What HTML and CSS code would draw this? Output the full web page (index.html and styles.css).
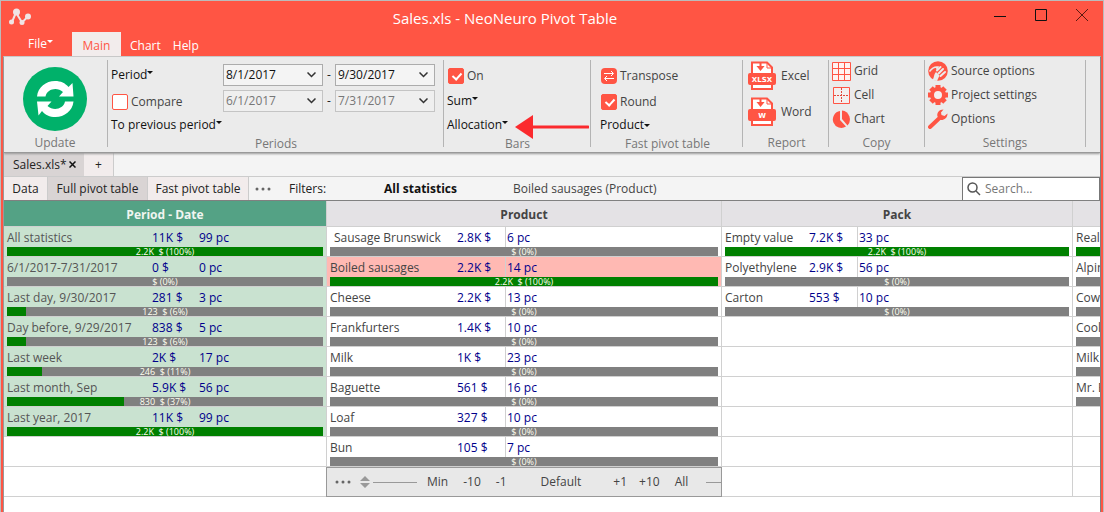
FILE: index.html
```html
<!DOCTYPE html>
<html lang="en">
<head>
<meta charset="utf-8">
<title>Sales.xls - NeoNeuro Pivot Table</title>
<link rel="stylesheet" href="styles.css">
</head>
<body>
<div class="window">
  <header class="titlebar">
    <svg class="logo" width="24" height="18" viewBox="0 0 24 18"><path d="M4 14 8 4.500 14 14.500 20 8.500" fill="none" stroke="#f0e4e4" stroke-width="2"/><g fill="#f0e4e4"><circle cx="3.500" cy="14" r="2.500"/><circle cx="8.500" cy="4" r="3.500"/><circle cx="14" cy="14.500" r="2.500"/><circle cx="20" cy="8.500" r="3"/></g></svg>
    <h1 class="title">Sales.xls - NeoNeuro Pivot Table</h1>
    <div class="window-buttons">
      <button class="window-button" aria-label="Minimize"><svg width="12" height="12"><path d="M0 7.500H12" stroke="#111"/></svg></button>
      <button class="window-button" aria-label="Maximize"><svg width="12" height="12"><path d="M.5 .5H11.500V11.500H.5Z" fill="none" stroke="#111"/></svg></button>
      <button class="window-button" aria-label="Close"><svg width="12" height="12"><path d="M0 0 12 12M12 0 0 12" stroke="#5c1a10"/></svg></button>
    </div>
  </header>
  <nav class="menu">
    <button class="menu-item file">File<i class="caret"></i></button>
    <button class="menu-item active">Main</button>
    <button class="menu-item">Chart</button>
    <button class="menu-item">Help</button>
  </nav>
  <div class="frame">
    <div class="ribbon">
      <section class="group update">
        <button class="refresh" aria-label="Update">
          <svg width="64" height="64" viewBox="0 0 64 64"><circle cx="32" cy="32" r="32" fill="#00b16a"/><path d="M14 29.500C15 20 23 14 32 14 38 14 42 16 45.500 20L49.500 16 50.500 29.500H36L40 25C34 19.500 24 22 22.500 29.500Z" fill="#fff"/><path d="M50.500 34.500C49.500 44 41.500 50 32.500 50 26.500 50 22.500 48 19 44L15.500 48.500 14 34.500H28.500L24.500 39C30.500 44.500 40.500 42 42 34.500Z" fill="#fff"/></svg>
        </button>
        <h2 class="caption">Update</h2>
      </section>
      <section class="group periods">
        <div class="period-grid">
          <button class="link">Period<i class="caret"></i></button>
          <div class="range"><span class="date"><select aria-label="Period start"><option>8/1/2017</option></select><svg width="9" height="6"><path d="M.5 .5 4.500 4.500 8.500 .5"/></svg></span><span class="dash">-</span><span class="date"><select aria-label="Period end"><option>9/30/2017</option></select><svg width="9" height="6"><path d="M.5 .5 4.500 4.500 8.500 .5"/></svg></span></div>
          <label class="check"><input type="checkbox">Compare</label>
          <div class="range"><span class="date"><select disabled aria-label="Comparison start"><option>6/1/2017</option></select><svg width="9" height="6"><path d="M.5 .5 4.500 4.500 8.500 .5"/></svg></span><span class="dash">-</span><span class="date"><select disabled aria-label="Comparison end"><option>7/31/2017</option></select><svg width="9" height="6"><path d="M.5 .5 4.500 4.500 8.500 .5"/></svg></span></div>
          <button class="link wide">To previous period<i class="caret"></i></button>
        </div>
        <h2 class="caption">Periods</h2>
      </section>
      <section class="group bars">
        <div class="stack">
          <label class="check"><input type="checkbox" checked>On</label>
          <button class="link">Sum<i class="caret"></i></button>
          <button class="link">Allocation<i class="caret"></i></button>
        </div>
        <h2 class="caption">Bars</h2>
        <svg class="pointer" width="74" height="24" viewBox="0 0 74 24"><path d="M18 12H73" stroke="#fb2a2e" stroke-width="3" stroke-linecap="round"/><path d="M0 12 18 0V24Z" fill="#fb2a2e"/></svg>
      </section>
      <section class="group fast">
        <div class="stack">
          <button class="check"><svg width="16" height="16"><rect width="16" height="16" rx="4" fill="#ff5544"/><path d="M3 5.500H12M10 3 12.500 5.500 10 8M13 10.500H4M6 8 3.500 10.500 6 13" fill="none" stroke="#fff"/></svg>Transpose</button>
          <label class="check"><input type="checkbox" checked>Round</label>
          <button class="link">Product<i class="caret low"></i></button>
        </div>
        <h2 class="caption">Fast pivot table</h2>
      </section>
      <section class="group report">
        <button class="tool tall"><svg width="28" height="30" viewBox="0 0 28 30"><path d="M4 12V1.500H19L24 6.500V12M4 22V28H24V22" fill="#fff" stroke="#ff5544" stroke-width="2"/><path d="M19 1V7H24" fill="none" stroke="#ff5544"/><path d="M12.500 2V8M10.500 6 12.500 8.500 14.500 6Z" fill="#ff5544" stroke="#ff5544" stroke-width="2"/><rect y="12" width="28" height="12" rx="2" fill="#ff5544"/><text x="14" y="21" text-anchor="middle" class="icon-text">XLSX</text></svg>Excel</button>
        <button class="tool tall"><svg width="28" height="30" viewBox="0 0 28 30"><path d="M4 12V1.500H19L24 6.500V12M4 22V28H24V22" fill="#fff" stroke="#ff5544" stroke-width="2"/><path d="M19 1V7H24" fill="none" stroke="#ff5544"/><path d="M12.500 2V8M10.500 6 12.500 8.500 14.500 6Z" fill="#ff5544" stroke="#ff5544" stroke-width="2"/><rect y="12" width="28" height="12" rx="2" fill="#ff5544"/><text x="14" y="21" text-anchor="middle" class="icon-text">W</text></svg>Word</button>
        <h2 class="caption">Report</h2>
      </section>
      <section class="group copy">
        <button class="tool"><svg width="19" height="19"><path d="M.5 .5H18.500V18.500H.5ZM6.500 0V19M12.500 0V19M0 6.500H19M0 12.500H19" fill="#fff3f1" stroke="#ff5544"/></svg>Grid</button>
        <button class="tool"><svg width="19" height="19"><path d="M1.500 1.500H17.500V17.500H1.500Z" fill="#f4efee" stroke="#ff5544"/><path d="M9.500 2V17M2 9.500H17" stroke="#e0483a" stroke-dasharray="2 1"/></svg>Cell</button>
        <button class="tool"><svg width="19" height="19"><path d="M8 1A8.500 8.500 0 1 0 14 16.500L8 10Z" fill="#ff5544"/><path d="M10 .5A9 9 0 0 1 15.500 15.500L10 9Z" fill="#ff5544"/></svg>Chart</button>
        <h2 class="caption">Copy</h2>
      </section>
      <section class="group settings">
        <button class="tool"><svg width="20" height="20" viewBox="0 0 20 20"><circle cx="10" cy="10" r="9.800" fill="#ff5544"/><path d="M1.500 10.500C4 7 7 5.500 10 6L8.500 8.500" fill="none" stroke="#ebebeb" stroke-width="1.500"/><path d="M15 8 10.500 12.500M17 11 12.500 15M12.500 6 9 9.500" stroke="#ebebeb" stroke-width="2" stroke-linecap="round"/><path d="M4.500 19C6.500 16.500 5.500 13.500 8 11L11.500 14.500 9 20Z" fill="#ebebeb"/></svg>Source options</button>
        <button class="tool"><svg width="20" height="20" viewBox="0 0 20 20"><circle cx="10" cy="10" r="6" fill="#f6eeee" stroke="#ff5544" stroke-width="4"/><path d="M10 0V3M10 17V20M0 10H3M17 10H20M3 3 5 5M15 15 17 17M3 17 5 15M15 5 17 3" stroke="#ff5544" stroke-width="5"/></svg>Project settings</button>
        <button class="tool"><svg width="20" height="20" viewBox="0 0 20 20"><path d="M2 18 11 9.500" stroke="#ff5544" stroke-width="4" stroke-linecap="round"/><path d="M15.500 .5C11 .5 8.500 4 9.500 7.500L12.500 11C16 11.500 19.500 9 19.500 4.500L16.500 7 13.500 6 13 3.500Z" fill="#ff5544"/></svg>Options</button>
        <h2 class="caption">Settings</h2>
      </section>
    </div>
    <div class="files">
      <div class="file-tab">Sales.xls*<button class="close" aria-label="Close file"><svg width="7" height="7"><path d="M.5 .5 6.500 6.500M6.500 .5 .5 6.500" stroke="#111" stroke-width="1.500"/></svg></button></div>
      <button class="add">+</button>
    </div>
    <div class="views">
      <button class="view data">Data</button>
      <button class="view full">Full pivot table</button>
      <button class="view quick">Fast pivot table</button>
      <div class="filters">
        <button class="dots" aria-label="More"><svg width="16" height="4"><g fill="#666"><circle cx="2" cy="2" r="1.500"/><circle cx="8" cy="2" r="1.500"/><circle cx="14" cy="2" r="1.500"/></g></svg></button>
        <span class="filters-label">Filters:</span>
        <button class="filter current">All statistics</button>
        <button class="filter">Boiled sausages (Product)</button>
      </div>
      <label class="search"><svg width="14" height="14"><circle cx="5.500" cy="5.500" r="4.500" fill="none" stroke="#555" stroke-width="1.500"/><path d="M9 9 13 13" stroke="#555" stroke-width="1.500"/></svg><input type="text" placeholder="Search..." aria-label="Search"></label>
    </div>
    <table class="pivot">
      <colgroup><col class="col-period"><col class="col-product"><col class="col-pack"><col></colgroup>
      <thead><tr><th class="period">Period - Date</th><th>Product</th><th>Pack</th><th></th></tr></thead>
      <tbody>
        <tr>
          <td class="period"><div class="cell"><span>All statistics</span><b>11K $</b><b>99 pc</b></div><div class="bar"><i style="width:100%"></i><span>2.2K&nbsp; $ (100%)</span></div></td>
          <td class="product"><div class="cell"><span class="indent">Sausage Brunswick</span><b>2.8K $</b><b>6 pc</b></div><div class="bar"><span>$ (0%)</span></div></td>
          <td class="pack"><div class="cell"><span>Empty value</span><b>7.2K $</b><b>33 pc</b></div><div class="bar"><i style="width:100%"></i><span>2.2K&nbsp; $ (100%)</span></div></td>
          <td class="cut"><div class="cell"><span>Real</span></div><div class="bar"><i style="width:100%"></i></div></td>
        </tr>
        <tr>
          <td class="period"><div class="cell"><span>6/1/2017-7/31/2017</span><b>0 $</b><b>0 pc</b></div><div class="bar"><span>$ (0%)</span></div></td>
          <td class="product selected"><div class="cell"><span>Boiled sausages</span><b>2.2K $</b><b>14 pc</b></div><div class="bar"><i style="width:100%"></i><span>2.2K&nbsp; $ (100%)</span></div></td>
          <td class="pack"><div class="cell"><span>Polyethylene</span><b>2.9K $</b><b>56 pc</b></div><div class="bar"><span>$ (0%)</span></div></td>
          <td class="cut"><div class="cell"><span>Alpine</span></div><div class="bar"></div></td>
        </tr>
        <tr>
          <td class="period"><div class="cell"><span>Last day, 9/30/2017</span><b>281 $</b><b>3 pc</b></div><div class="bar"><i style="width:6%"></i><span>123&nbsp; $ (6%)</span></div></td>
          <td class="product"><div class="cell"><span>Cheese</span><b>2.2K $</b><b>13 pc</b></div><div class="bar"><span>$ (0%)</span></div></td>
          <td class="pack"><div class="cell"><span>Carton</span><b>553 $</b><b>10 pc</b></div><div class="bar"><span>$ (0%)</span></div></td>
          <td class="cut"><div class="cell"><span>Cow</span></div><div class="bar"></div></td>
        </tr>
        <tr>
          <td class="period"><div class="cell"><span>Day before, 9/29/2017</span><b>838 $</b><b>5 pc</b></div><div class="bar"><i style="width:6%"></i><span>123&nbsp; $ (6%)</span></div></td>
          <td class="product"><div class="cell"><span>Frankfurters</span><b>1.4K $</b><b>10 pc</b></div><div class="bar"><span>$ (0%)</span></div></td>
          <td></td>
          <td class="cut"><div class="cell"><span>Cool</span></div><div class="bar"></div></td>
        </tr>
        <tr>
          <td class="period"><div class="cell"><span>Last week</span><b>2K $</b><b>17 pc</b></div><div class="bar"><i style="width:11%"></i><span>246&nbsp; $ (11%)</span></div></td>
          <td class="product"><div class="cell"><span>Milk</span><b>1K $</b><b>23 pc</b></div><div class="bar"><span>$ (0%)</span></div></td>
          <td></td>
          <td class="cut"><div class="cell"><span>Milk</span></div><div class="bar"></div></td>
        </tr>
        <tr>
          <td class="period"><div class="cell"><span>Last month, Sep</span><b>5.9K $</b><b>56 pc</b></div><div class="bar"><i style="width:37%"></i><span>830&nbsp; $ (37%)</span></div></td>
          <td class="product"><div class="cell"><span>Baguette</span><b>561 $</b><b>16 pc</b></div><div class="bar"><span>$ (0%)</span></div></td>
          <td></td>
          <td class="cut"><div class="cell"><span>Mr. B</span></div><div class="bar"></div></td>
        </tr>
        <tr>
          <td class="period"><div class="cell"><span>Last year, 2017</span><b>11K $</b><b>99 pc</b></div><div class="bar"><i style="width:100%"></i><span>2.2K&nbsp; $ (100%)</span></div></td>
          <td class="product"><div class="cell"><span>Loaf</span><b>327 $</b><b>10 pc</b></div><div class="bar"><span>$ (0%)</span></div></td>
          <td></td>
          <td></td>
        </tr>
        <tr>
          <td></td>
          <td class="product"><div class="cell"><span>Bun</span><b>105 $</b><b>7 pc</b></div><div class="bar"><span>$ (0%)</span></div></td>
          <td></td>
          <td></td>
        </tr>
        <tr>
          <td></td>
          <td class="pager-cell"><div class="pager">
            <button aria-label="More"><svg width="16" height="4"><g fill="#666"><circle cx="2" cy="2" r="1.500"/><circle cx="8" cy="2" r="1.500"/><circle cx="14" cy="2" r="1.500"/></g></svg></button>
            <button class="sort" aria-label="Sort"><svg width="10" height="12"><path d="M0 5 5 0 10 5ZM0 7 5 12 10 7Z" fill="#999"/></svg></button>
            <hr class="rule">
            <button class="min">Min</button><button class="less">-10</button><button class="one">-1</button><button class="default">Default</button><button class="one">+1</button><button class="less">+10</button><button>All</button>
            <hr class="rule short">
          </div></td>
          <td></td>
          <td></td>
        </tr>
      </tbody>
    </table>
  </div>
</div>
</body>
</html>
```
FILE: styles.css
```css
* { box-sizing: border-box; }
body { margin: 0; background: #ff5544; font-family: "Open Sans", "Noto Sans", sans-serif; font-size: 12px; line-height: 16px; color: #444; }
button, input, select { font: inherit; color: inherit; }
button { margin: 0; padding: 0; border: 0; background: none; white-space: nowrap; }
svg { flex: none; }

.window { display: flex; flex-direction: column; min-height: 100vh; padding: 0 2px; border: 1px solid #bbb; border-bottom: 0; background: #ff5544; }
.titlebar { display: flex; align-items: center; height: 31px; padding-left: 5px; }
.logo { margin-top: 1px; }
.title { flex: 1; margin: 0; padding-top: 3px; font-size: 15px; line-height: 20px; font-weight: 400; text-align: center; color: #fff; }
.window-buttons { display: flex; align-self: stretch; padding-top: 1px; }
.window-button { width: 41px; padding-left: 2px; }

.menu { display: flex; height: 24px; color: #fff; }
.menu-item { padding: 4px 12px 0 0; }
.menu-item.file { width: 69px; padding: 0 0 0 6px; }
.menu-item.active { width: 49px; margin-right: 9px; padding: 4px 0 0; background: #f2ecec; color: #ff5544; }

.caret { display: inline-block; border: 3px solid transparent; border-top-color: currentColor; border-bottom: 0; vertical-align: 5px; }
.caret.low { vertical-align: 2px; }

.frame { flex: 1; border: 1px solid #ccc; border-left-color: #999; border-right-color: #808080; border-bottom: 0; background: #fff; }

.ribbon { position: relative; display: flex; height: 96px; background: #ebebeb; border-bottom: 1px solid #999; box-shadow: 0 1px 2px #999; }
.group { position: relative; display: flex; flex-direction: column; padding-bottom: 1px; }
.group::after { content: ""; position: absolute; top: 3px; right: 0; bottom: 5px; border-right: 1px solid #b4b4b4; }
.caption { margin: auto 0 0; font-size: 12px; line-height: 16px; font-weight: 400; text-align: center; color: #777; }
.update { width: 104px; align-items: center; padding-right: 2px; }
.refresh { margin-top: 10px; height: 64px; }
.periods { width: 336px; padding-left: 3px; }
.periods .caption { padding-right: 3px; }
.bars { width: 147px; padding-left: 3px; }
.bars .caption { padding-right: 3px; }
.fast { width: 152px; padding-left: 9px; }
.fast .caption { padding-right: 8px; }
.report { width: 86px; padding: 1px 0 1px 5px; }
.report .caption, .copy .caption, .settings .caption { padding-right: 4px; }
.copy { width: 96px; padding: 2px 0 1px 3px; }
.settings { width: 161px; padding: 2px 0 1px 3px; }

.period-grid { display: grid; grid-template-columns: 112px auto; grid-template-rows: 26px 26px 22px; padding-top: 5px; }
.stack { display: grid; grid-template-rows: 26px 26px 22px; padding-top: 5px; }
.link { justify-self: start; color: #111; }
.wide { grid-column: span 2; }
.check { display: flex; align-items: center; gap: 3px; padding-left: 1px; padding-top: 1px; }
.check input { appearance: none; width: 16px; height: 16px; margin: 0; border: 1px solid #ff5544; border-radius: 2px; background: #fff; }
.check input:checked { background: #ff5544; }
.check input:checked::before { content: ""; display: block; width: 4px; height: 7px; margin: 2px 0 0 5px; border: solid #fff; border-width: 0 2px 2px 0; rotate: 42deg; }
.range { display: flex; align-items: center; }
.dash { width: 12px; text-align: center; color: #222; }
.date { display: grid; align-items: center; width: 100px; }
.date select, .date svg { grid-area: 1 / 1; }
.date select { appearance: none; width: 100%; height: 22px; padding: 0 2px; border: 1px solid #acacac; border-radius: 0; background: #f4f4f4; color: #111; }
.date select:disabled { border-color: #c4c4c4; background: #efefef; color: #777; opacity: 1; }
.date svg { justify-self: end; margin-right: 7px; fill: none; stroke: #333; stroke-width: 1.5; pointer-events: none; }
.pointer { position: absolute; left: 71px; top: 58px; }

.tool { display: flex; align-items: center; gap: 3px; height: 24px; }
.tall { height: 36px; gap: 5px; }
.icon-text { font: bold 7px "DejaVu Sans", sans-serif; fill: #fff; }

.files { display: flex; height: 24px; border-bottom: 1px solid #ccc; background: #f4f4f4; color: #222; }
.file-tab { display: flex; align-items: center; gap: 2px; width: 80px; padding-left: 9px; background: #d9d4d4; }
.close { display: flex; }
.add { width: 30px; border-right: 1px solid #ccc; background: #f2ecec; }

.views { display: flex; height: 24px; border-bottom: 1px solid #808080; background: #f4f4f4; color: #222; }
.view { border-right: 1px solid #ccc; background: #f2ecec; }
.view.data { width: 44px; }
.view.full { width: 100px; background: #d9d4d4; }
.view.quick { width: 101px; }
.filters { flex: 1; display: flex; align-items: center; padding-left: 6px; }
.dots { display: flex; }
.filters-label { margin-left: 18px; width: 95px; }
.filter { margin-right: 56px; color: #444; }
.filter.current { font-weight: 700; color: #111; }
.search { display: flex; align-items: center; gap: 4px; width: 138px; padding-left: 4px; border: 1px solid #777; border-bottom: 0; background: #fff; }
.search input { width: 100px; padding: 0; border: 0; outline: 0; background: none; }
.search input::placeholder { color: #777; opacity: 1; }

.pivot { width: 100%; table-layout: fixed; border-collapse: separate; border-spacing: 0; }
.col-period { width: 323px; }
.col-product { width: 395px; }
.col-pack { width: 351px; }
.pivot th { height: 26px; padding: 2px 0 0; border: solid #d0d0d0; border-width: 0 1px 1px 0; background: #e4e2e5; color: #444; }
.pivot th.period { background: #54a285; color: #f0f5f0; }
.pivot td { height: 30px; padding: 0 3px; border: solid #d0d0d0; border-width: 0 1px 1px 0; vertical-align: top; }
.pivot tr > :last-child { border-right: 0; }
.pivot td.period { background: #c9e2d0; color: #555; }
.pivot td.selected { background: #ffb9b3; }
.pivot td.cut { padding-right: 0; overflow: hidden; }
.cell { display: grid; height: 20px; line-height: 22px; white-space: nowrap; }
.cell b { height: 20px; font-weight: 400; color: #00008b; }
.period .cell { grid-template-columns: 145px 47px auto; }
.product .cell { grid-template-columns: 127px 48px auto; }
.pack .cell { grid-template-columns: 84px 48px auto; }
.product b:last-child, .pack b:last-child { padding-left: 1px; border-left: 1px solid #d0d0d0; }
.indent { padding-left: 4px; }
.bar { display: grid; height: 9px; background: #808080; color: #fffff0; font-size: 9px; line-height: 9px; text-align: center; }
.bar i, .bar span { grid-area: 1 / 1; }
.bar i { background: #008000; }

.pivot td.pager-cell { padding: 0; border-right: 0; }
.pager { display: flex; align-items: center; height: 30px; margin: 0 0 -1px -1px; padding-left: 8px; border: 1px solid #999; background: #e8e8e8; }
.pager button { display: flex; }
.sort { margin: 0 3px 0 9px; }
.rule { width: 44px; margin: 0; border: 0; border-top: 1px solid #999; }
.rule.short { width: 15px; margin-left: auto; }
.min { margin: 0 15px 0 10px; }
.less { margin-right: 15px; }
.one { margin-right: 12px; }
.default { margin: 0 32px 0 22px; }
```
